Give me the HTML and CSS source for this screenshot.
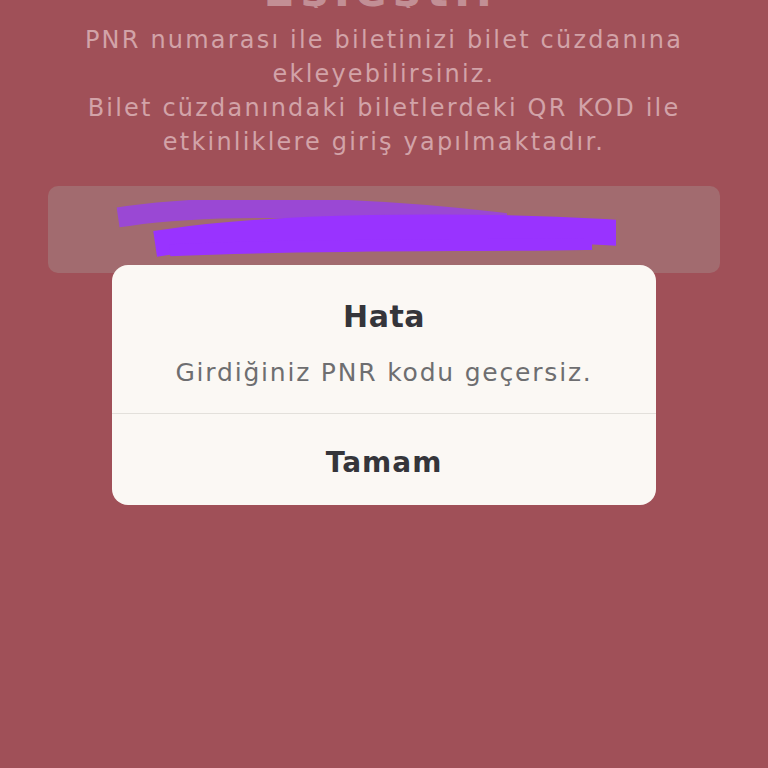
FILE: index.html
```html
<!DOCTYPE html>
<html lang="tr">
<head>
<meta charset="utf-8">
<link rel="stylesheet" href="styles.css">
</head>
<body>
<div class="page">
  <div class="title-clip"><h1 class="title">Eşleştir</h1></div>
  <p class="desc">PNR numarası ile biletinizi bilet cüzdanına<br>ekleyebilirsiniz.<br>Bilet cüzdanındaki biletlerdeki QR KOD ile<br>etkinliklere giriş yapılmaktadır.</p>
  <div class="input">
    <svg class="scribble" width="500" height="60" viewBox="0 0 500 60">
      <path d="M12 16 C 110 2, 260 8, 380 22" stroke="#9a48d4" stroke-width="20" fill="none" stroke-linecap="square"/>
      <path d="M52 42 C 160 26, 340 24, 488 32" stroke="#9933ff" stroke-width="26" fill="none" stroke-linecap="square"/>
      <path d="M60 50 C 200 44, 350 46, 470 44" stroke="#9933ff" stroke-width="12" fill="none" stroke-linecap="square"/>
    </svg>
  </div>
</div>
<div class="overlay">
  <div class="dialog">
    <div class="dialog-body">
      <div class="dialog-title">Hata</div>
      <div class="dialog-msg">Girdiğiniz PNR kodu geçersiz.</div>
    </div>
    <div class="dialog-btn">Tamam</div>
  </div>
</div>
</body>
</html>
```
FILE: styles.css
```css
html, body {
  margin: 0;
  padding: 0;
  width: 768px;
  height: 768px;
  overflow: hidden;
  background: #a05058;
  font-family: "DejaVu Sans", "Noto Sans", sans-serif;
}
.page {
  display: flex;
  flex-direction: column;
  align-items: center;
  padding: 0 48px;
}
.title-clip {
  height: 8px;
  overflow: hidden;
  display: flex;
  flex-direction: column;
  justify-content: flex-end;
}
.title {
  margin: 0;
  font-size: 46px;
  line-height: 44px;
  height: 44px;
  flex-shrink: 0;
  font-weight: 700;
  color: #c28f95;
  letter-spacing: 6px;
  position: relative;
  top: 4px;
}
.desc {
  margin: 15px 0 0 0;
  text-align: center;
  font-size: 24px;
  line-height: 34px;
  color: #d2a3a8;
  letter-spacing: 2.2px;
  white-space: nowrap;
}
.input {
  margin-top: 27px;
  width: 672px;
  height: 87px;
  border-radius: 10px;
  background: #a26b6f;
  display: flex;
  align-items: center;
  padding-left: 68px;
  box-sizing: border-box;
}
.scribble {
  display: block;
}
.overlay {
  position: absolute;
  left: 0;
  top: 0;
  width: 768px;
  height: 768px;
}
.dialog {
  position: absolute;
  left: 112px;
  top: 265px;
  width: 544px;
  height: 240px;
  background: #fbf8f4;
  border-radius: 16px;
  display: flex;
  flex-direction: column;
  overflow: hidden;
}
.dialog-body {
  height: 149px;
  border-bottom: 1.5px solid #e3e0db;
  display: flex;
  flex-direction: column;
  align-items: center;
  box-sizing: border-box;
  padding-top: 32px;
}
.dialog-title {
  font-size: 30px;
  font-weight: 700;
  color: #35353a;
  line-height: 40px;
  letter-spacing: 0.5px;
}
.dialog-msg {
  margin-top: 19px;
  font-size: 25px;
  color: #6e6e70;
  line-height: 34px;
  letter-spacing: 1.8px;
}
.dialog-btn {
  flex: 1;
  display: flex;
  align-items: center;
  justify-content: center;
  font-size: 28px;
  font-weight: 700;
  color: #35353a;
  letter-spacing: 1px;
  padding-top: 6px;
}
```
